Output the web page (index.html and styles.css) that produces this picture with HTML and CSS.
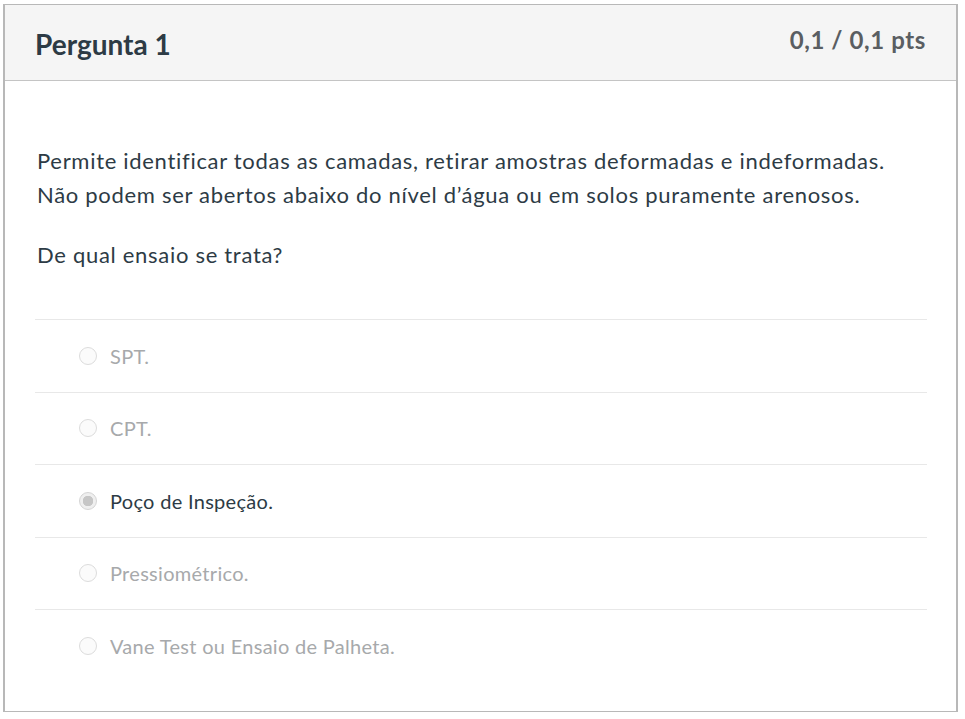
FILE: index.html
```html
<!DOCTYPE html>
<html lang="pt">
<head>
<meta charset="utf-8">
<link rel="stylesheet" href="styles.css">
</head>
<body>
<div class="card">
  <div class="header">
    <h2 class="title">Pergunta 1</h2>
    <div class="points">0,1 / 0,1 pts</div>
  </div>
  <div class="body">
    <div class="question">
      <p>Permite identificar todas as camadas, retirar amostras deformadas e indeformadas.<br>Não podem ser abertos abaixo do nível d’água ou em solos puramente arenosos.</p>
      <p>De qual ensaio se trata?</p>
    </div>
    <div class="answers">
      <div class="answer"><span class="radio"></span><span class="label">SPT.</span></div>
      <div class="answer"><span class="radio"></span><span class="label">CPT.</span></div>
      <div class="answer selected"><span class="radio"></span><span class="label">Poço de Inspeção.</span></div>
      <div class="answer"><span class="radio"></span><span class="label">Pressiométrico.</span></div>
      <div class="answer"><span class="radio"></span><span class="label">Vane Test ou Ensaio de Palheta.</span></div>
    </div>
  </div>
</div>
</body>
</html>
```

FILE: styles.css
```css
html, body {
  margin: 0;
  padding: 0;
  background: #ffffff;
}
body {
  font-family: Lato, "Open Sans", sans-serif;
  color: #2d3b45;
}
.card {
  margin: 4px 0 0 3px;
  width: 955px;
  height: 708px;
  box-sizing: border-box;
  border: 1px solid #b8b8b8;
  border-left-width: 2px;
  border-right-width: 2px;
}
.header {
  height: 75px;
  background: #f5f5f5;
  border-bottom: 1px solid #c4c4c4;
  display: flex;
  justify-content: space-between;
  align-items: flex-start;
  padding: 0 30px 0 30px;
}
.title {
  margin: 0;
  font-size: 28px;
  font-weight: 700;
  line-height: 34px;
  padding-top: 22px;
  color: #2d3b45;
}
.points {
  font-size: 24px;
  font-weight: 700;
  line-height: 28px;
  letter-spacing: 0.6px;
  padding-top: 21px;
  color: #5a5e62;
}
.body {
  padding: 0 29px 0 30px;
}
.question {
  padding: 0 2px;
  margin-top: 63px;
  font-size: 22px;
  letter-spacing: 0.7px;
  line-height: 34px;
}
.question p {
  margin: 0 0 26px 0;
}
.answers {
  margin-top: 47px;
  border-top: 1px solid #e8e8e8;
}
.answer {
  height: 71.5px;
  border-bottom: 1px solid #e8e8e8;
  display: flex;
  align-items: center;
  padding-left: 44px;
  gap: 13px;
  color: #a7a9ab;
  font-size: 20px;
  letter-spacing: 0.3px;
}
.answer:last-child {
  border-bottom: none;
}
.radio {
  width: 18px;
  height: 18px;
  box-sizing: border-box;
  border-radius: 50%;
  border: 1px solid #dcdcdc;
  background: #fbfbfb;
  flex: none;
}
.selected {
  color: #2d3b45;
}
.selected .radio {
  border: 1px solid #d4d4d4;
  background: radial-gradient(circle, #c6c6c6 0 5px, #efefef 5.5px);
}
```
